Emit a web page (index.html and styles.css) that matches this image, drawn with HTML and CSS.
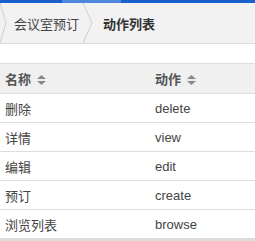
FILE: index.html
```html
<!DOCTYPE html>
<html>
<head>
    <title>动作列表</title>
    <link rel="stylesheet" href="styles.css">
</head>
<body>
    <div class="topbar">
        <div class="seg seg-a"></div>
        <div class="seg seg-b"></div>
        <div class="seg seg-c"></div>
    </div>
    <div class="crumbs">
        <svg class="sep sep-first" width="8" height="40" viewBox="0 0 8 40"><polyline points="0,0 6,20 0,40" fill="none" stroke="#cfcfcf" stroke-width="1"/></svg>
        <span class="crumb">会议室预订</span>
        <svg class="sep" width="12" height="40" viewBox="0 0 12 40"><polyline points="1,0 10,20 1,40" fill="none" stroke="#cfcfcf" stroke-width="1"/></svg>
        <span class="crumb current">动作列表</span>
    </div>

    <table class="grid">
        <thead>
            <tr>
                <th class="col-name">名称 <svg class="sort" width="9" height="10" viewBox="0 0 9 10"><path d="M4.5 0 L9 4 L0 4 Z M0 6 L9 6 L4.5 10 Z" fill="#888"/></svg></th>
                <th>动作 <svg class="sort" width="9" height="10" viewBox="0 0 9 10"><path d="M4.5 0 L9 4 L0 4 Z M0 6 L9 6 L4.5 10 Z" fill="#888"/></svg></th>
            </tr>
        </thead>
        <tbody>
            <tr><td>删除</td><td>delete</td></tr>
            <tr><td>详情</td><td>view</td></tr>
            <tr><td>编辑</td><td>edit</td></tr>
            <tr><td>预订</td><td>create</td></tr>
            <tr><td>浏览列表</td><td>browse</td></tr>
        </tbody>
    </table>
</body>
</html>
```

FILE: styles.css
```css
body { margin: 0; font-family: "Liberation Sans", "Noto Sans CJK SC", sans-serif; font-size: 13px; color: #333; background: #fff; }
.topbar { display: flex; height: 3px; overflow: hidden; }
.seg { height: 3px; }
.seg-a { width: 62px; background: #1a5fcc; }
.seg-b { width: 59px; background: #4f87dc; }
.seg-c { flex: 1; background: #1a5fcc; }
.crumbs { display: flex; align-items: center; height: 40px; background: #f2f2f2; border-bottom: 1px solid #dcdcdc; }
.sep { display: block; flex: none; }
.sep-first { margin-right: 6px; }
.crumb { color: #444; }
.crumbs .sep + .crumb.current { margin-left: 9px; }
.crumbs .crumb + .sep { margin-left: 3px; }
.current { font-weight: bold; color: #333; }
.grid { width: 100%; margin-top: 19px; border-collapse: collapse; border-top: 1px solid #ddd; border-bottom: 3px solid #ddd; }
.grid th { background: #f0f0f0; color: #555; font-weight: bold; text-align: left; height: 29px; padding: 0 5px; border-bottom: 1px solid #ddd; }
.grid td { height: 28px; padding: 0 5px; border-bottom: 1px solid #ddd; color: #444; }
.grid tr:last-child td { border-bottom: none; }
.col-name { width: 140px; }
.sort { vertical-align: -1px; margin-left: 2px; }
```
